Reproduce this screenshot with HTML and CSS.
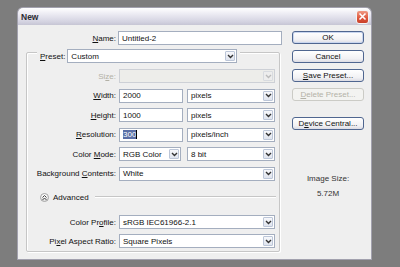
FILE: index.html
```html
<!DOCTYPE html>
<html lang="en">
<head>
    <meta charset="UTF-8">
    <meta name="viewport" content="width=device-width, initial-scale=1.0">
    <title>New</title>
    <link rel="stylesheet" href="styles.css">
</head>
<body>
    <div class="window">
        <div class="titlebar">
            <span class="title">New</span>
            <span class="close">
                <svg width="9" height="9" viewBox="0 0 9 9"><path d="M1.5 1.5 L7.5 7.5 M7.5 1.5 L1.5 7.5" stroke="#fff" stroke-width="1.6" fill="none"/></svg>
            </span>
        </div>
        <div class="body">
            <div class="main">
                <div class="name-row">
                    <span class="lbl"><u>N</u>ame:</span>
                    <div class="field name-field">Untitled-2</div>
                </div>

                <div class="group">
                    <div class="group-head">
                        <span><u>P</u>reset:</span>
                        <div class="field select preset">Custom<span class="arrow"><svg width="7" height="5" viewBox="0 0 7 5"><path d="M1 1 L3.5 3.5 L6 1" stroke="#333" stroke-width="1.4" fill="none"/></svg></span></div>
                    </div>

                    <div class="grid">
                        <span class="lbl disabled">Si<u>z</u>e:</span>
                        <div class="field select disabled"><span></span><span class="arrow"><svg width="7" height="5" viewBox="0 0 7 5"><path d="M1 1 L3.5 3.5 L6 1" stroke="#bbb" stroke-width="1.4" fill="none"/></svg></span></div>

                        <span class="lbl"><u>W</u>idth:</span>
                        <div class="pair">
                            <div class="field num">2000</div>
                            <div class="field select unit">pixels<span class="arrow"><svg width="7" height="5" viewBox="0 0 7 5"><path d="M1 1 L3.5 3.5 L6 1" stroke="#333" stroke-width="1.4" fill="none"/></svg></span></div>
                        </div>

                        <span class="lbl"><u>H</u>eight:</span>
                        <div class="pair">
                            <div class="field num">1000</div>
                            <div class="field select unit">pixels<span class="arrow"><svg width="7" height="5" viewBox="0 0 7 5"><path d="M1 1 L3.5 3.5 L6 1" stroke="#333" stroke-width="1.4" fill="none"/></svg></span></div>
                        </div>

                        <span class="lbl"><u>R</u>esolution:</span>
                        <div class="pair">
                            <div class="field num"><span class="picked">300</span><span class="caret"></span></div>
                            <div class="field select unit">pixels/inch<span class="arrow"><svg width="7" height="5" viewBox="0 0 7 5"><path d="M1 1 L3.5 3.5 L6 1" stroke="#333" stroke-width="1.4" fill="none"/></svg></span></div>
                        </div>

                        <span class="lbl">Color <u>M</u>ode:</span>
                        <div class="pair">
                            <div class="field select mode">RGB Color<span class="arrow"><svg width="7" height="5" viewBox="0 0 7 5"><path d="M1 1 L3.5 3.5 L6 1" stroke="#333" stroke-width="1.4" fill="none"/></svg></span></div>
                            <div class="field select unit">8 bit<span class="arrow"><svg width="7" height="5" viewBox="0 0 7 5"><path d="M1 1 L3.5 3.5 L6 1" stroke="#333" stroke-width="1.4" fill="none"/></svg></span></div>
                        </div>

                        <span class="lbl">Background <u>C</u>ontents:</span>
                        <div class="field select">White<span class="arrow"><svg width="7" height="5" viewBox="0 0 7 5"><path d="M1 1 L3.5 3.5 L6 1" stroke="#333" stroke-width="1.4" fill="none"/></svg></span></div>
                    </div>

                    <div class="advanced">
                        <span class="adv-btn"><svg width="7" height="7" viewBox="0 0 7 7"><path d="M1.5 3.5 L3.5 1.5 L5.5 3.5 M1.5 6 L3.5 4 L5.5 6" stroke="#444" stroke-width="1" fill="none"/></svg></span>
                        <span>Advanced</span>
                        <span class="adv-line"></span>
                    </div>

                    <div class="grid grid-adv">
                        <span class="lbl">Color Pr<u>o</u>file:</span>
                        <div class="field select">sRGB IEC61966-2.1<span class="arrow"><svg width="7" height="5" viewBox="0 0 7 5"><path d="M1 1 L3.5 3.5 L6 1" stroke="#333" stroke-width="1.4" fill="none"/></svg></span></div>

                        <span class="lbl">Pi<u>x</u>el Aspect Ratio:</span>
                        <div class="field select">Square Pixels<span class="arrow"><svg width="7" height="5" viewBox="0 0 7 5"><path d="M1 1 L3.5 3.5 L6 1" stroke="#333" stroke-width="1.4" fill="none"/></svg></span></div>
                    </div>
                </div>
            </div>

            <div class="side">
                <div class="btn default">OK</div>
                <div class="btn">Cancel</div>
                <div class="btn"><span><u>S</u>ave Preset...</span></div>
                <div class="btn disabled"><span><u>D</u>elete Preset...</span></div>
                <div class="btn device"><span>D<u>e</u>vice Central...</span></div>
                <div class="image-size">
                    <div>Image Size:</div>
                    <div class="size-value">5.72M</div>
                </div>
            </div>
        </div>
    </div>
</body>
</html>
```

FILE: styles.css
```css
body {
    margin: 0;
    background-color: #7d7d7d;
    font-family: "Liberation Sans", Arial, sans-serif;
    font-size: 8px;
    color: #111;
}

u {
    text-decoration-thickness: 1px;
    text-underline-offset: 1px;
}

.window {
    margin: 7px 0 0 17px;
    width: 355px;
    height: 253px;
    display: flex;
    flex-direction: column;
}

.titlebar {
    height: 18px;
    flex: none;
    box-sizing: border-box;
    display: flex;
    align-items: center;
    justify-content: space-between;
    padding: 0 2px 0 3px;
    background: linear-gradient(#ffffff, #ecebf3 35%, #d4d3e1 80%, #c6c5d4);
    border: 1px solid #a2a1ae;
    border-bottom: none;
    border-radius: 6px 6px 0 0;
}

.title {
    font-weight: bold;
    font-size: 8.5px;
    color: #2b2b33;
}

.close {
    width: 13px;
    height: 14px;
    box-sizing: border-box;
    border: 1px solid #f4f4f4;
    border-radius: 3px;
    background: linear-gradient(#f09a84, #dd553b 60%, #c9402a);
    display: flex;
    align-items: center;
    justify-content: center;
}

.body {
    flex: 1;
    display: flex;
    gap: 10px;
    padding: 6px 7px 0 0;
    background-color: #efefef;
    border: 1px solid #a2a1ae;
    border-top: none;
}

.main {
    width: 264px;
    display: flex;
    flex-direction: column;
}

.name-row {
    display: flex;
    align-items: center;
    gap: 2px;
}

.name-row .lbl {
    width: 98px;
    text-align: right;
}

.field {
    height: 14px;
    box-sizing: border-box;
    border: 1px solid #a4aebf;
    background-color: #fff;
    display: flex;
    align-items: center;
    padding-left: 3px;
    white-space: nowrap;
}

.name-field {
    width: 164px;
}

.select {
    justify-content: space-between;
    padding-right: 1px;
}

.arrow {
    width: 10px;
    height: 10px;
    box-sizing: border-box;
    border: 1px solid #bcc6d8;
    border-radius: 1px;
    background: linear-gradient(#f7f8fb, #dfe4ee);
    display: flex;
    align-items: center;
    justify-content: center;
}

.group {
    margin: 7px 0 0 8px;
    width: 254px;
    box-sizing: border-box;
    border: 1px solid #c6c6c6;
    border-radius: 2px;
    box-shadow: inset 1px 1px 0 #fff, 1px 1px 0 #fff;
    padding: 0 3px 3px 0;
}

.group-head {
    display: flex;
    align-items: center;
    gap: 2px;
    width: fit-content;
    margin: -4px 0 0 10px;
    padding: 0 3px;
    background-color: #efefef;
}

.preset {
    width: 170px;
}

.grid {
    display: grid;
    grid-template-columns: 89px 156px;
    column-gap: 3px;
    row-gap: 5.5px;
    align-items: center;
    margin-top: 6px;
}

.grid-adv {
    margin-top: 13px;
    row-gap: 5px;
}

.lbl {
    text-align: right;
    white-space: nowrap;
}

.lbl.disabled {
    color: #b3b1a6;
}

.field.disabled {
    background-color: #ededea;
    border-color: #cdd0d6;
}

.field.disabled .arrow {
    border-color: #d8dbe0;
    background: #ededed;
}

.pair {
    display: flex;
    justify-content: space-between;
}

.num {
    width: 64px;
}

.mode {
    width: 62px;
}

.unit {
    width: 88px;
}

.picked {
    background-color: #5a6fa6;
    color: #fff;
}

.caret {
    width: 1px;
    height: 9px;
    background-color: #000;
}

.advanced {
    display: flex;
    align-items: center;
    gap: 4px;
    height: 10px;
    margin: 11.5px 0 0 13px;
}

.adv-btn {
    width: 9px;
    height: 9px;
    box-sizing: border-box;
    border: 1px solid #a3a3a3;
    border-radius: 50%;
    background: linear-gradient(#fff, #e2e2e2);
    display: flex;
    align-items: center;
    justify-content: center;
}

.adv-line {
    flex: 1;
    margin-left: 2px;
    border-top: 1px solid #c6c6c6;
    border-bottom: 1px solid #fff;
}

.side {
    width: 72px;
    display: flex;
    flex-direction: column;
    gap: 6px;
}

.btn {
    height: 13px;
    box-sizing: border-box;
    border: 1px solid #4f6690;
    border-radius: 3px;
    background: linear-gradient(#ffffff, #f1f1f4 70%, #dcdce4);
    display: flex;
    align-items: center;
    justify-content: center;
    white-space: nowrap;
}

.btn.default {
    box-shadow: inset 0 0 0 1px #c9d6ef;
}

.btn.disabled {
    border-color: #cbcbc6;
    color: #b4b2a8;
    background: #f3f3f1;
}

.btn.device {
    margin-top: 10px;
}

.image-size {
    margin-top: 38px;
    text-align: center;
    line-height: 10px;
    color: #333;
}

.size-value {
    margin-top: 5px;
}
```
